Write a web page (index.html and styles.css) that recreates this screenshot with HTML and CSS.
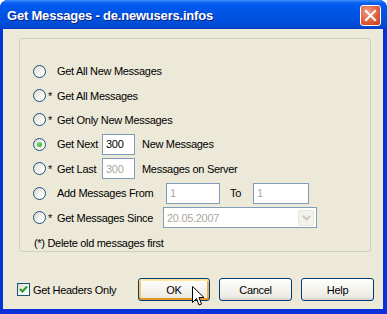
FILE: index.html
```html
<!DOCTYPE html>
<html lang="en">
<head>
    <meta charset="UTF-8">
    <title>Get Messages - de.newusers.infos</title>
    <link rel="stylesheet" href="styles.css">
</head>
<body>
    <div class="window">
        <div class="titlebar">
            <span class="title">Get Messages - de.newusers.infos</span>
            <button class="close-btn" aria-label="Close">
                <svg width="13" height="13" viewBox="0 0 13 13">
                    <path d="M2 2 L11 11 M11 2 L2 11" stroke="#fff" stroke-width="2.2" stroke-linecap="square"/>
                </svg>
            </button>
        </div>
        <div class="client">
            <div class="groupbox">
                <div class="row">
                    <span class="radio"></span>
                    <span class="star"></span>
                    <span>Get All New Messages</span>
                </div>
                <div class="row">
                    <span class="radio"></span>
                    <span class="star">*</span>
                    <span>Get All Messages</span>
                </div>
                <div class="row">
                    <span class="radio"></span>
                    <span class="star">*</span>
                    <span>Get Only New Messages</span>
                </div>
                <div class="row">
                    <span class="radio checked"></span>
                    <span class="star"></span>
                    <span class="label-short">Get Next</span>
                    <span class="edit edit-num">300</span>
                    <span class="after">New Messages</span>
                </div>
                <div class="row">
                    <span class="radio"></span>
                    <span class="star">*</span>
                    <span class="label-short">Get Last</span>
                    <span class="edit edit-num disabled">300</span>
                    <span class="after">Messages on Server</span>
                </div>
                <div class="row">
                    <span class="radio"></span>
                    <span class="star"></span>
                    <span class="label-from">Add Messages From</span>
                    <span class="edit edit-from disabled">1</span>
                    <span class="label-to">To</span>
                    <span class="edit edit-to disabled">1</span>
                </div>
                <div class="row">
                    <span class="radio"></span>
                    <span class="star">*</span>
                    <span class="label-since">Get Messages Since</span>
                    <span class="edit combo disabled">
                        <span class="combo-text">20.05.2007</span>
                        <span class="combo-btn">
                            <svg width="9" height="6" viewBox="0 0 9 6">
                                <path d="M1 1 L4.5 4.5 L8 1" fill="none" stroke="#C9C7BA" stroke-width="2"/>
                            </svg>
                        </span>
                    </span>
                </div>
                <div class="note">(*) Delete old messages first</div>
            </div>
            <div class="footer">
                <label class="check-label">
                    <span class="checkbox">
                        <svg width="9" height="9" viewBox="0 0 9 9">
                            <path d="M1 4 L3.5 6.5 L8 1.5" fill="none" stroke="#21A121" stroke-width="2"/>
                        </svg>
                    </span>
                    Get Headers Only
                </label>
                <div class="buttons">
                    <button class="btn default">OK</button>
                    <button class="btn">Cancel</button>
                    <button class="btn">Help</button>
                </div>
            </div>
        </div>
        <svg class="cursor" width="13" height="21" viewBox="0 0 13 21">
            <path d="M0.5 0.5 L0.5 16.5 L4.5 12.5 L7 19 L9.5 18 L7 11.5 L12 11.5 Z" fill="#fff" stroke="#000" stroke-width="1"/>
        </svg>
    </div>
</body>
</html>
```

FILE: styles.css
```css
body {
    margin: 0;
    background: #fff;
    font-family: 'Liberation Sans', Arial, sans-serif;
    font-size: 11px;
    letter-spacing: -0.3px;
    color: #000;
}

.window {
    position: relative;
    width: 387px;
    height: 314px;
    display: flex;
    flex-direction: column;
    background: #0831D9;
    border-radius: 8px 8px 0 0;
    overflow: hidden;
}

.titlebar {
    flex-shrink: 0;
    height: 29px;
    display: flex;
    align-items: center;
    padding: 0 6px 0 7px;
    background: linear-gradient(#3C8FFF 0, #0A5FF0 3px, #0058EE 6px, #0054E3 14px, #0050DC 22px, #0047D0 27px, #0838C8 29px);
}

.title {
    flex: 1;
    color: #fff;
    font-weight: bold;
    font-size: 13px;
    letter-spacing: -0.2px;
    text-shadow: 1px 1px 0 #0A1E80;
    margin-top: 1px;
}

.close-btn {
    width: 21px;
    height: 21px;
    padding: 0;
    margin-top: 1px;
    border: 1px solid #fff;
    border-radius: 3px;
    background: radial-gradient(circle at 35% 30%, #F09A80, #E0603C 55%, #C23A14);
    display: flex;
    align-items: center;
    justify-content: center;
}

.client {
    flex: 1;
    margin: 0 4px 5px 3px;
    background: #ECE9D8;
    display: flex;
    flex-direction: column;
}

.groupbox {
    box-sizing: border-box;
    margin: 9px 12px 0 16px;
    height: 214px;
    border: 1px solid #D0D0BF;
    border-radius: 3px;
    padding: 20px 0 0 13px;
}

.row {
    height: 24.4px;
    display: flex;
    align-items: center;
}

.radio {
    width: 11px;
    height: 11px;
    border: 1px solid #1C5180;
    border-radius: 50%;
    background: linear-gradient(135deg, #DCD8CC, #F6F5F0 55%, #fff);
    display: flex;
    align-items: center;
    justify-content: center;
}

.radio.checked::after {
    content: '';
    width: 5px;
    height: 5px;
    border-radius: 50%;
    background: radial-gradient(circle at 40% 35%, #6CE36C, #21A121);
}

.star {
    width: 9px;
    margin-left: 2px;
}

.label-short {
    width: 45px;
}

.label-from {
    width: 109px;
}

.label-since {
    width: 106px;
}

.label-to {
    width: 23px;
    margin-left: 10px;
}

.after {
    margin-left: 7px;
}

.edit {
    box-sizing: border-box;
    height: 21px;
    border: 1px solid #7F9DB9;
    background: #fff;
    padding-left: 3px;
    display: flex;
    align-items: center;
}

.edit.disabled {
    color: #ACA899;
}

.edit-num {
    width: 33px;
}

.edit-from {
    width: 54px;
}

.edit-to {
    width: 56px;
}

.combo {
    width: 154px;
    padding-right: 2px;
}

.combo-text {
    flex: 1;
}

.combo-btn {
    width: 16px;
    height: 16px;
    box-sizing: border-box;
    border: 1px solid #E8E6DC;
    border-radius: 2px;
    background: #F3F2EC;
    display: flex;
    align-items: center;
    justify-content: center;
}

.note {
    margin: 7px 0 0 1px;
}

.footer {
    display: flex;
    align-items: center;
    justify-content: space-between;
    padding: 26px 9px 0 14px;
}

.check-label {
    display: flex;
    align-items: center;
    gap: 3px;
}

.checkbox {
    width: 11px;
    height: 11px;
    border: 1px solid #1C5180;
    background: linear-gradient(135deg, #DCD8CC, #F6F5F0 55%, #fff);
    display: flex;
    align-items: center;
    justify-content: center;
}

.buttons {
    display: flex;
    gap: 9px;
}

.btn {
    width: 73px;
    height: 23px;
    border: 1px solid #003C74;
    border-radius: 3px;
    background: linear-gradient(#FFFFFF, #F4F3EE 50%, #ECEBE6 85%, #D6D0C5);
    font-family: 'Liberation Sans', Arial, sans-serif;
    font-size: 11px;
    letter-spacing: -0.3px;
    color: #000;
    padding: 0;
}

.btn.default {
    width: 72px;
    box-shadow: inset 0 2px 0 #FFE7A2, inset 0 -2px 0 #E5971F, inset 2px 0 0 #F9C760, inset -2px 0 0 #F0AE45;
}

.cursor {
    position: absolute;
    left: 192px;
    top: 286px;
}
```
